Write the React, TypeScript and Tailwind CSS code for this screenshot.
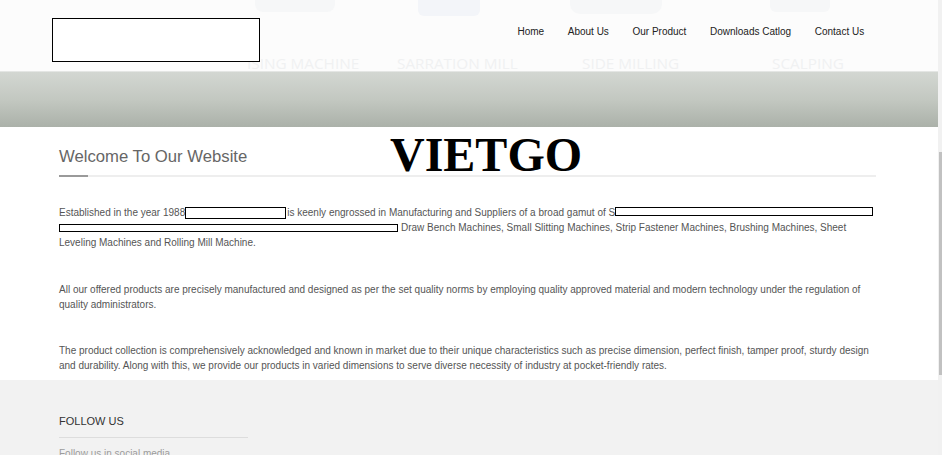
import React from "react";

const navItems = ["Home", "About Us", "Our Product", "Downloads Catlog", "Contact Us"];

const captions = [
  { label: "ISING MACHINE", left: 247 },
  { label: "SARRATION MILL", left: 397 },
  { label: "SIDE MILLING", left: 582 },
  { label: "SCALPING", left: 772 },
];

function Header() {
  return (
    <div className="relative h-[72px] bg-[#fcfcfc] border-b border-[#e4e6e4] overflow-hidden">
      {/* washed-out banner slider behind the nav */}
      <div className="absolute inset-0">
        <div className="absolute left-[255px] top-[-6px] w-[80px] h-[18px] rounded-b-[8px] bg-[#f6f7f8]" />
        <div className="absolute left-[418px] top-[-6px] w-[62px] h-[22px] rounded-b-[6px] bg-[#f3f5f9]" />
        <div className="absolute left-[570px] top-[-6px] w-[92px] h-[20px] rounded-b-[10px] bg-[#f6f7f8]" />
        <div className="absolute left-[770px] top-[-6px] w-[60px] h-[18px] rounded-b-[6px] bg-[#f6f7f8]" />
        {captions.map((c) => (
          <span
            key={c.label}
            className="absolute top-[54px] text-[15.3px] leading-[18px] text-[#f0f1f2] font-['Open_Sans',sans-serif]"
            style={{ left: c.left }}
          >
            {c.label}
          </span>
        ))}
      </div>
      <div className="relative flex items-start justify-between pl-[52px] pr-[62px] pt-[18px]">
        <div className="w-[208px] h-[44px] border border-black bg-white" />
        <nav className="flex mt-[6px]">
          {navItems.map((item) => (
            <a key={item} className="px-[11.8px] text-[10px] leading-[16px] text-[#222]">
              {item}
            </a>
          ))}
        </nav>
      </div>
    </div>
  );
}

function Box({ w, h, mt }: { w: string; h: string; mt: string }) {
  return <span className={`${w} ${h} ${mt} shrink-0 border border-black bg-white`} />;
}

export default function App() {
  return (
    <div className="flex w-[942px] bg-[#f2f2f2] font-['Liberation_Sans',Arial,sans-serif]">
      <div className="flex-1 min-w-0">
        <Header />
        <div className="h-[55px] bg-gradient-to-b from-[#d3d7d2] via-[#c3c8c1] to-[#abb1a9]" />

        <main className="relative bg-white pl-[59px] pr-[62px] pt-[20px] pb-[7px] text-[10px] leading-[15px] text-[#555]">
          <h2 className="text-[16.7px] leading-[20px] font-normal text-[#666]">Welcome To Our Website</h2>
          <div className="flex mt-[8px]">
            <div className="w-[29px] h-[2px] bg-[#9a9a9a]" />
            <div className="flex-1 h-[2px] bg-[#eeeeee]" />
          </div>

          <div
            className="absolute left-[390px] top-[-2px] text-[48px] leading-[60px] font-bold text-black font-['Liberation_Serif','Times_New_Roman',serif]"
          >
            VIETGO
          </div>

          <div className="mt-[28px] whitespace-nowrap">
            <div className="flex h-[15px] items-start">
              <span>Established in the year 1988</span>
              <Box w="w-[101px]" h="h-[12px]" mt="mt-[1.5px]" />
              <span className="ml-[1px]">is keenly engrossed in Manufacturing and Suppliers of a broad gamut of S</span>
              <Box w="w-[258px]" h="h-[9px]" mt="mt-[1.5px]" />
            </div>
            <div className="flex h-[15px] items-start">
              <Box w="w-[339px]" h="h-[8px]" mt="mt-[3.5px]" />
              <span className="ml-[3px]">
                Draw Bench Machines, Small Slitting Machines, Strip Fastener Machines, Brushing Machines, Sheet
              </span>
            </div>
            <div>Leveling Machines and Rolling Mill Machine.</div>
          </div>

          <p className="mt-[32px]">
            All our offered products are precisely manufactured and designed as per the set quality norms by employing
            quality approved material and modern technology under the regulation of
            <br />
            quality administrators.
          </p>

          <p className="mt-[31px]">
            The product collection is comprehensively acknowledged and known in market due to their unique
            characteristics such as precise dimension, perfect finish, tamper proof, sturdy design
            <br />
            and durability. Along with this, we provide our products in varied dimensions to serve diverse necessity of
            industry at pocket-friendly rates.
          </p>
        </main>

        <footer className="h-[75px] bg-[#f2f2f2] pl-[59px] pt-[34px] overflow-hidden">
          <h3 className="text-[11px] leading-[14px] text-[#333] uppercase">Follow Us</h3>
          <div className="w-[189px] h-px bg-[#dddddd] mt-[9px]" />
          <p className="mt-[9px] text-[10px] leading-[14px] text-[#9c9c9c]">Follow us in social media</p>
        </footer>
      </div>

      <div className="w-[4px] shrink-0 bg-[#f1f1f1]">
        <div className="mt-[152px] h-[223px] w-[3px] ml-[1px] bg-[#c1c1c1]" />
      </div>
    </div>
  );
}
